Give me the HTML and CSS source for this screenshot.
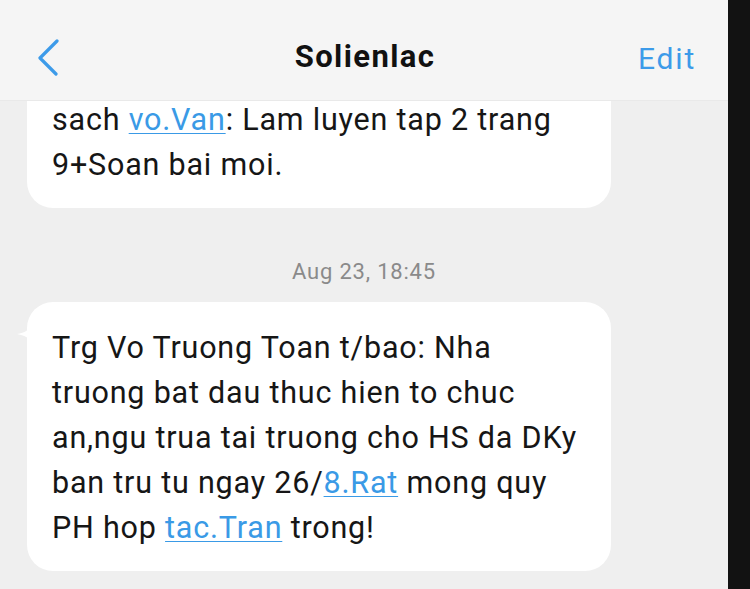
FILE: index.html
```html
<!DOCTYPE html>
<html>
<head>
<meta charset="utf-8">
<link rel="stylesheet" href="styles.css">
</head>
<body>
<div class="screen">
  <div class="app">
    <header class="topbar">
      <span class="back">
        <svg width="30" height="40" viewBox="0 0 30 40"><path d="M19 3 L2 20 L18 36" fill="none" stroke="#3d9be9" stroke-width="3.2" stroke-linecap="round" stroke-linejoin="round"/></svg>
      </span>
      <span class="title">Solienlac</span>
      <span class="edit">Edit</span>
    </header>
    <main class="thread">
      <div class="bubble first">sach <a class="link">vo.Van</a>: Lam luyen tap 2 trang<br>9+Soan bai moi.</div>
      <div class="stamp">Aug 23, 18:45</div>
      <div class="bubble second">
        <svg class="tail" width="14" height="16" viewBox="0 0 14 16"><path d="M14 0 C12 6 8 9 0 10 C6 11 10 13 14 16 Z" fill="#ffffff"/></svg>
        Trg Vo Truong Toan t/bao: Nha<br>truong bat dau thuc hien to chuc<br>an,ngu trua tai truong cho HS da DKy<br>ban tru tu ngay 26/<a class="link">8.Rat</a> mong quy<br>PH hop <a class="link">tac.Tran</a> trong!</div>
    </main>
  </div>
  <div class="edge"></div>
</div>
</body>
</html>
```

FILE: styles.css
```css
html {
  margin: 0;
  padding: 0;
  overflow: hidden;
  background: #121212;
}
body {
  margin: 0;
  padding: 0;
  width: 750px;
  height: 589px;
  overflow: hidden;
  background: #121212;
  font-family: Roboto, "Liberation Sans", sans-serif;
}
.screen {
  display: grid;
  grid-template-columns: 728px 22px;
  width: 750px;
  height: 589px;
}
.app {
  display: flex;
  flex-direction: column;
  background: #efefef;
  overflow: hidden;
}
.edge {
  background-color: #121212;
  height: 589px;
}
.topbar {
  height: 100px;
  flex: none;
  background: #f5f5f5;
  border-bottom: 1px solid #e9e9e9;
  display: flex;
  align-items: center;
  position: relative;
  z-index: 1;
}
.back {
  width: 30px;
  height: 40px;
  margin-left: 38px;
  margin-top: 15px;
  display: flex;
}
.title {
  flex: 1;
  text-align: center;
  font-size: 31px;
  font-weight: bold;
  letter-spacing: 1.4px;
  color: #111;
  margin-top: 13px;
  margin-left: -68px;
  margin-right: -90px;
}
.edit {
  width: 90px;
  font-size: 30px;
  letter-spacing: 1.8px;
  color: #3d9be9;
  margin-top: 16px;
  margin-left: -2px;
}
.thread {
  flex: 1;
  display: flex;
  flex-direction: column;
  align-items: flex-start;
}
.bubble {
  position: relative;
  width: 584px;
  box-sizing: border-box;
  margin-left: 27px;
  background: #fff;
  border-radius: 26px;
  padding: 23px 10px 21px 25px;
  font-size: 30.5px;
  letter-spacing: 0.8px;
  line-height: 45px;
  color: #161616;
  white-space: nowrap;
}
.bubble.first {
  margin-top: -27px;
  border-top-left-radius: 0;
  border-top-right-radius: 0;
}
.link {
  color: #3a9ae6;
  text-decoration: underline;
  text-decoration-thickness: 1px;
  text-underline-offset: 3px;
}
.stamp {
  align-self: center;
  margin-top: 52px;
  margin-bottom: 18px;
  font-size: 22px;
  letter-spacing: 0.8px;
  line-height: 24px;
  color: #8a8a8a;
}
.tail {
  position: absolute;
  left: -10px;
  top: 22px;
}
```
